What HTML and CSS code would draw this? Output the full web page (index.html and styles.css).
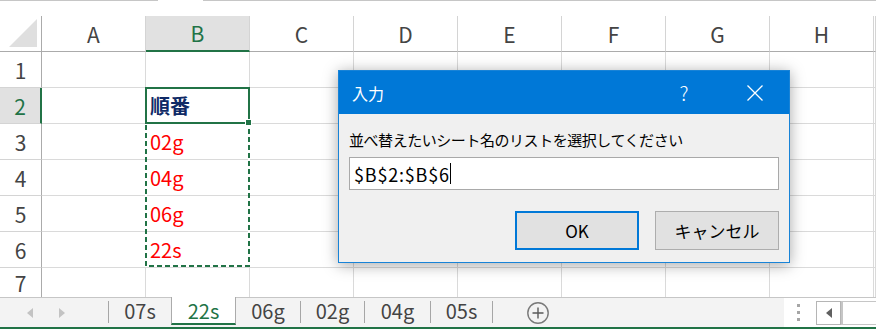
FILE: index.html
```html
<!DOCTYPE html>
<html lang="ja">
<head>
    <meta charset="UTF-8">
    <meta name="viewport" content="width=device-width, initial-scale=1.0">
    <title>シートの並べ替え</title>
    <link rel="stylesheet" href="styles.css">
</head>
<body>
    <div class="topline">
        <span class="seg seg-a"></span>
        <span class="seg seg-b"></span>
    </div>

    <div class="sheet">
        <div class="grid">
            <!-- 列見出し -->
            <div class="corner">
                <svg width="30" height="30" viewBox="0 0 30 30"><polygon points="29,1 29,29 1,29" fill="#dfdfdf"/></svg>
            </div>
            <div class="col-head">A</div>
            <div class="col-head selected">B</div>
            <div class="col-head">C</div>
            <div class="col-head">D</div>
            <div class="col-head">E</div>
            <div class="col-head">F</div>
            <div class="col-head">G</div>
            <div class="col-head">H</div>
            <div class="col-head edge"></div>

            <div class="row-head">1</div>
            <div class="cell"></div><div class="cell"></div><div class="cell"></div><div class="cell"></div>
            <div class="cell"></div><div class="cell"></div><div class="cell"></div><div class="cell"></div>
            <div class="cell edge"></div>

            <div class="row-head selected">2</div>
            <div class="cell"></div><div class="cell title">順番</div><div class="cell"></div><div class="cell"></div>
            <div class="cell"></div><div class="cell"></div><div class="cell"></div><div class="cell"></div>
            <div class="cell edge"></div>

            <div class="row-head">3</div>
            <div class="cell"></div><div class="cell red">02g</div><div class="cell"></div><div class="cell"></div>
            <div class="cell"></div><div class="cell"></div><div class="cell"></div><div class="cell"></div>
            <div class="cell edge"></div>

            <div class="row-head">4</div>
            <div class="cell"></div><div class="cell red">04g</div><div class="cell"></div><div class="cell"></div>
            <div class="cell"></div><div class="cell"></div><div class="cell"></div><div class="cell"></div>
            <div class="cell edge"></div>

            <div class="row-head">5</div>
            <div class="cell"></div><div class="cell red">06g</div><div class="cell"></div><div class="cell"></div>
            <div class="cell"></div><div class="cell"></div><div class="cell"></div><div class="cell"></div>
            <div class="cell edge"></div>

            <div class="row-head">6</div>
            <div class="cell"></div><div class="cell red">22s</div><div class="cell"></div><div class="cell"></div>
            <div class="cell"></div><div class="cell"></div><div class="cell"></div><div class="cell"></div>
            <div class="cell edge"></div>

            <div class="row-head open">7</div>
            <div class="cell open"></div><div class="cell open"></div><div class="cell open"></div><div class="cell open"></div>
            <div class="cell open"></div><div class="cell open"></div><div class="cell open"></div><div class="cell open"></div>
            <div class="cell open edge"></div>
        </div>

        <!-- コピー範囲の点線 -->
        <svg class="marquee" width="105" height="180" viewBox="0 0 105 180">
            <rect x="1" y="1" width="103" height="178" fill="none" stroke="#ffffff" stroke-width="2"/>
            <rect x="1" y="1" width="103" height="178" fill="none" stroke="#217346" stroke-width="2" stroke-dasharray="5 3"/>
        </svg>
        <div class="active-cell"><span class="fill-handle"></span></div>

        <!-- 入力ダイアログ -->
        <div class="dialog">
            <div class="dialog-title">
                <span class="title-text">入力</span>
                <span class="help">?</span>
                <span class="close">
                    <svg width="16" height="16" viewBox="0 0 16 16"><path d="M0.5 0.5 L15.5 15.5 M15.5 0.5 L0.5 15.5" stroke="#ffffff" stroke-width="1.3" fill="none"/></svg>
                </span>
            </div>
            <div class="dialog-body">
                <div class="prompt">並べ替えたいシート名のリストを選択してください</div>
                <div class="input-box">$B$2:$B$6<span class="caret"></span></div>
                <div class="dialog-buttons">
                    <button class="btn primary">OK</button>
                    <button class="btn">キャンセル</button>
                </div>
            </div>
        </div>
    </div>

    <div class="tabbar">
        <div class="tab-nav">
            <span class="arrow-left"></span>
            <span class="arrow-right"></span>
        </div>
        <span class="sep"></span>
        <div class="tab w62">07s</div>
        <div class="tab active">22s</div>
        <div class="tab w64">06g</div>
        <span class="sep"></span>
        <div class="tab w63">02g</div>
        <span class="sep"></span>
        <div class="tab w65">04g</div>
        <span class="sep"></span>
        <div class="tab w61">05s</div>
        <span class="sep"></span>
        <svg class="add-sheet" width="22" height="22" viewBox="0 0 22 22">
            <circle cx="11" cy="11" r="10.2" fill="none" stroke="#7a7a7a" stroke-width="1.4"/>
            <path d="M11 5.5 V16.5 M5.5 11 H16.5" stroke="#5a5a5a" stroke-width="1.4"/>
        </svg>
        <div class="spacer"></div>
        <div class="scroll-area">
            <div class="dots"><span></span><span></span><span></span></div>
            <div class="scroll-btn"><span class="arrow-dark"></span></div>
            <div class="scroll-thumb"></div>
        </div>
    </div>
</body>
</html>
```

FILE: styles.css
```css
body {
    margin: 0;
    width: 876px;
    height: 329px;
    overflow: hidden;
    background-color: #fff;
    color: #444;
    font-family: "Noto Sans CJK JP", "Noto Sans", sans-serif;
}

.topline {
    display: flex;
    height: 16px;
}

.seg {
    border-top: 1px solid #c6c6c6;
}

.seg-a {
    width: 158px;
}

.seg-b {
    margin-left: 45px;
    flex: 1;
}

.sheet {
    position: relative;
}

.grid {
    display: grid;
    grid-template-columns: 42px repeat(8, 104px) 2px;
    grid-template-rows: repeat(7, 36px) 29px;
}

.grid > div {
    box-sizing: border-box;
    display: flex;
    align-items: center;
}

.corner {
    justify-content: flex-end;
    align-items: flex-end !important;
    padding: 0 3px 3px 0;
    border-right: 1px solid #ababab;
    border-bottom: 1px solid #ababab;
}

.col-head {
    justify-content: center;
    font-size: 21px;
    border-right: 1px solid #d4d4d4;
    border-bottom: 1px solid #ababab;
}

.col-head.selected {
    background-color: #e1e1e1;
    color: #217346;
    border-bottom: 2px solid #217346;
}

.row-head {
    justify-content: center;
    font-size: 21px;
    border-right: 1px solid #ababab;
    border-bottom: 1px solid #d4d4d4;
}

.row-head.selected {
    background-color: #e1e1e1;
    color: #217346;
    border-right: 2px solid #217346;
}

.cell {
    padding-left: 4px;
    font-size: 20px;
    border-right: 1px solid #dadada;
    border-bottom: 1px solid #dadada;
}

.grid > .open {
    border-bottom: none;
}

.cell.edge {
    padding: 0;
}

.cell.title {
    color: #0f2a66;
    font-weight: bold;
}

.cell.red {
    color: #ff0000;
}

/* 選択範囲 */
.marquee {
    position: absolute;
    left: 145px;
    top: 71px;
}

.active-cell {
    position: absolute;
    left: 145px;
    top: 71px;
    width: 105px;
    height: 37px;
    box-sizing: border-box;
    border: 2px solid #217346;
}

.fill-handle {
    position: absolute;
    right: -4px;
    bottom: -4px;
    width: 5px;
    height: 5px;
    background-color: #217346;
    border: 1px solid #fff;
}

/* ダイアログ */
.dialog {
    position: absolute;
    left: 338px;
    top: 54px;
    width: 452px;
    height: 193px;
    box-sizing: border-box;
    border: 1px solid #1883d7;
    background-color: #f0f0f0;
    box-shadow: 0 2px 14px rgba(0,0,0,0.35);
    display: flex;
    flex-direction: column;
    color: #000;
}

.dialog-title {
    height: 43px;
    background-color: #0078d7;
    color: #fff;
    display: flex;
    align-items: center;
    padding-left: 13px;
    font-size: 16px;
}

.title-text {
    flex: 1;
}

.help {
    width: 40px;
    margin-right: 28px;
    text-align: center;
    font-size: 20px;
    font-weight: 300;
}

.close {
    width: 46px;
    margin-right: 11px;
    display: flex;
    justify-content: center;
}

.dialog-body {
    padding: 16px 10px 0 10px;
    display: flex;
    flex-direction: column;
}

.prompt {
    font-size: 15px;
    line-height: 20px;
    letter-spacing: -0.45px;
}

.input-box {
    margin-top: 7px;
    height: 33px;
    box-sizing: border-box;
    border: 1px solid #a9a9a9;
    background-color: #fff;
    padding-left: 4px;
    display: flex;
    align-items: center;
    font-size: 18px;
    letter-spacing: 0.8px;
}

.caret {
    display: inline-block;
    width: 1px;
    height: 21px;
    margin-left: 0;
    background-color: #000;
}

.dialog-buttons {
    margin-top: 21px;
    display: flex;
    justify-content: flex-end;
    gap: 16px;
}

.btn {
    width: 124px;
    height: 39px;
    box-sizing: border-box;
    background-color: #e1e1e1;
    border: 1px solid #adadad;
    padding: 0;
    font-family: inherit;
    font-size: 17px;
    color: #000;
}

.btn.primary {
    border: 2px solid #0078d7;
}

/* シート見出し */
.tabbar {
    display: flex;
    height: 32px;
    box-sizing: border-box;
    border-top: 1px solid #c6c6c6;
    border-bottom: 2px solid #217346;
    background-color: #f3f3f3;
    font-size: 20px;
}

.tab-nav {
    width: 108px;
    display: flex;
    align-items: center;
}

.arrow-left {
    margin-left: 27px;
    border-right: 6px solid #c3c3c3;
    border-top: 5px solid transparent;
    border-bottom: 5px solid transparent;
}

.arrow-right {
    margin-left: 26px;
    border-left: 6px solid #c3c3c3;
    border-top: 5px solid transparent;
    border-bottom: 5px solid transparent;
}

.sep {
    width: 1px;
    height: 22px;
    margin-top: 3px;
    background-color: #a6a6a6;
}

.tab {
    height: 24px;
    display: flex;
    align-items: center;
    justify-content: center;
}

.w61 { width: 61px; }
.w62 { width: 62px; }
.w63 { width: 63px; }
.w64 { width: 64px; }
.w65 { width: 65px; }

.tab.active {
    width: 65px;
    height: 28px;
    margin-top: -1px;
    box-sizing: border-box;
    padding-top: 1px;
    background-color: #fff;
    color: #217346;
    border-left: 1px solid #ababab;
    border-right: 1px solid #ababab;
    border-bottom: 2px solid #217346;
}

.add-sheet {
    margin: 4px 0 0 34px;
}

.spacer {
    flex: 1;
}

.scroll-area {
    width: 92px;
    background-color: #fff;
    display: flex;
    align-items: center;
}

.dots {
    margin-left: 13px;
    display: flex;
    flex-direction: column;
    gap: 4px;
}

.dots span {
    width: 3px;
    height: 3px;
    background-color: #a6a6a6;
}

.scroll-btn {
    margin-left: 16px;
    width: 25px;
    height: 24px;
    box-sizing: border-box;
    border: 1px solid #b5b5b5;
    display: flex;
    align-items: center;
    justify-content: center;
}

.arrow-dark {
    border-right: 6px solid #606060;
    border-top: 5px solid transparent;
    border-bottom: 5px solid transparent;
}

.scroll-thumb {
    flex: 1;
    height: 24px;
    box-sizing: border-box;
    border: 1px solid #c6c6c6;
    border-left: 2px solid #c6c6c6;
    border-right: none;
}
```
